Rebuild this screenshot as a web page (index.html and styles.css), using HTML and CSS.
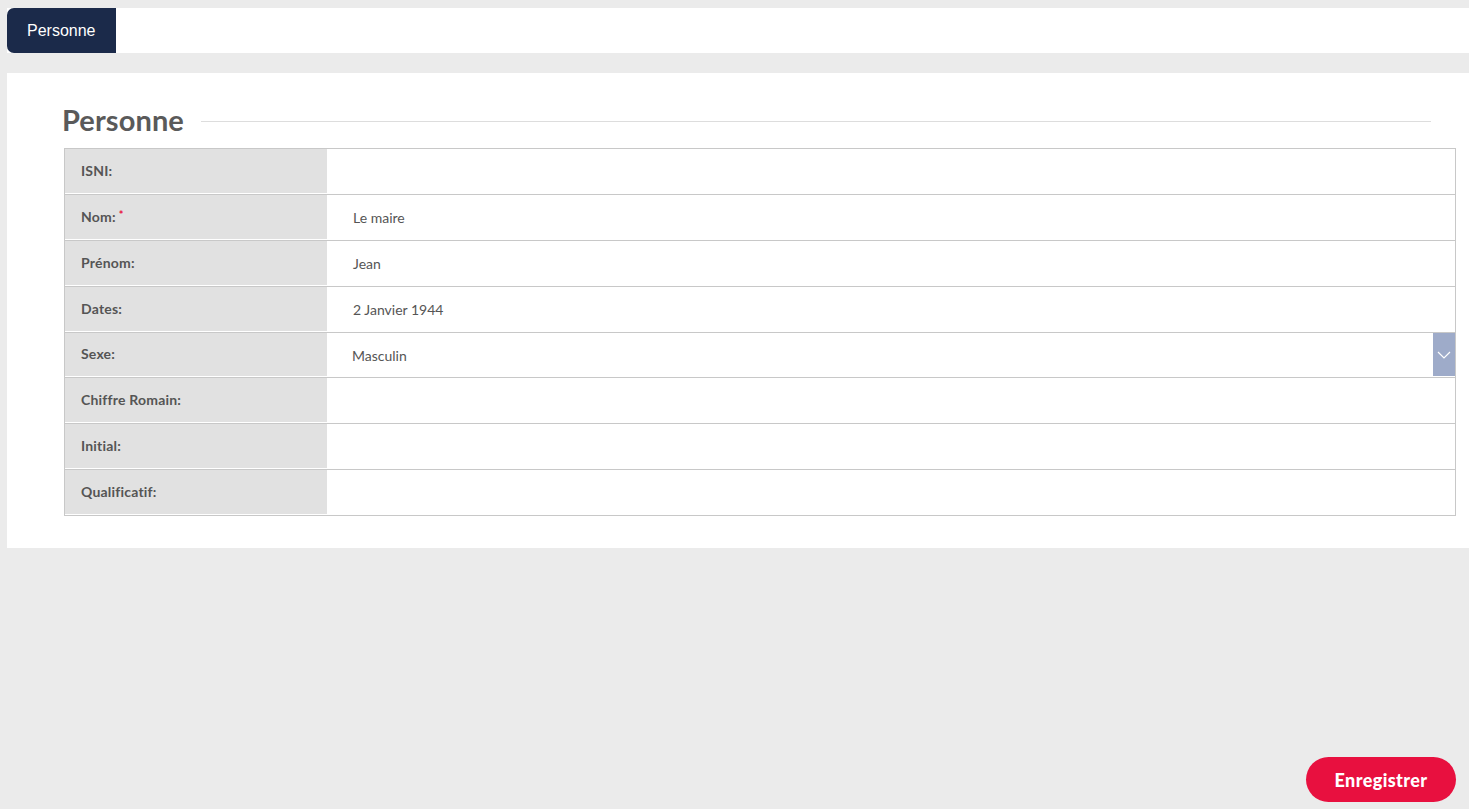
FILE: index.html
```html
<!DOCTYPE html>
<html lang="fr">
<head>
    <meta charset="UTF-8">
    <title>Personne</title>
    <link rel="stylesheet" href="styles.css">
</head>
<body>
    <div class="tabs">
        <div class="tab active">Personne</div>
    </div>

    <div class="panel">
        <div class="section-title">
            <h2>Personne</h2>
            <span class="rule"></span>
        </div>

        <div class="form-table">
            <div class="row">
                <div class="label">ISNI:</div>
                <div class="value"></div>
            </div>
            <div class="row">
                <div class="label">Nom: <span class="req">*</span></div>
                <div class="value">Le maire</div>
            </div>
            <div class="row">
                <div class="label">Prénom:</div>
                <div class="value">Jean</div>
            </div>
            <div class="row">
                <div class="label">Dates:</div>
                <div class="value">2 Janvier 1944</div>
            </div>
            <div class="row row-select">
                <div class="label">Sexe:</div>
                <div class="value select">
                    <span>Masculin</span>
                    <span class="arrow">
                        <svg width="14" height="8" viewBox="0 0 14 8"><path d="M1 1 L7 7 L13 1" fill="none" stroke="#fff" stroke-width="1.2"/></svg>
                    </span>
                </div>
            </div>
            <div class="row">
                <div class="label">Chiffre Romain:</div>
                <div class="value"></div>
            </div>
            <div class="row">
                <div class="label">Initial:</div>
                <div class="value"></div>
            </div>
            <div class="row">
                <div class="label">Qualificatif:</div>
                <div class="value"></div>
            </div>
        </div>
    </div>

    <button class="save">Enregistrer</button>
</body>
</html>
```

FILE: styles.css
```css
* {
    margin: 0;
    padding: 0;
    box-sizing: border-box;
}

body {
    background: #ebebeb;
    font-family: 'Lato', 'Open Sans', sans-serif;
    color: #555;
    height: 809px;
    padding: 8px 0 0 7px;
    position: relative;
}

.tabs {
    display: flex;
    background: #fff;
    height: 45px;
}

.tab {
    background: #1b2a4a;
    color: #fff;
    font-family: 'Liberation Sans', Arial, sans-serif;
    font-size: 16px;
    padding: 0 20px;
    width: 109px;
    display: flex;
    align-items: center;
    border-radius: 7px 0 0 7px;
}

.panel {
    background: #fff;
    margin-top: 20px;
    padding: 28px 13px 31px 55px;
    height: 475px;
}

.section-title {
    display: flex;
    align-items: center;
    gap: 17px;
    padding-right: 25px;
    margin-bottom: 9px;
}

.section-title h2 {
    font-size: 29px;
    font-weight: 700;
    color: #5a5a5a;
    line-height: 38px;
    letter-spacing: 0.1px;
}

.rule {
    flex: 1;
    height: 1px;
    background: #ddd;
    margin-top: 3px;
}

.form-table {
    border: 1px solid #c8c8c8;
    border-bottom: none;
    margin-left: 2px;
}

.row {
    display: flex;
    height: 46px;
    border-bottom: 1px solid #c8c8c8;
}

.row-select {
    height: 45px;
}

.label {
    width: 262px;
    background: #e1e1e1;
    padding-left: 16px;
    font-size: 14px;
    font-weight: 700;
    letter-spacing: 0.2px;
    display: flex;
    align-items: center;
    margin-bottom: 1px;
    padding-bottom: 2px;
}

.req {
    color: #e8103f;
    font-size: 11px;
    align-self: flex-start;
    margin-top: 13px;
    margin-left: 3px;
}

.value {
    flex: 1;
    padding-left: 26px;
    font-size: 14px;
    display: flex;
    align-items: center;
    padding-bottom: 1px;
}

.value.select {
    justify-content: space-between;
    padding-left: 25px;
    padding-bottom: 0;
}

.arrow {
    width: 22px;
    height: 43px;
    background: #9eabc9;
    display: flex;
    align-items: center;
    justify-content: center;
    margin-bottom: 1px;
}

.save {
    position: absolute;
    right: 13px;
    bottom: 7px;
    width: 150px;
    height: 45px;
    border: none;
    border-radius: 23px;
    background: #e8103f;
    color: #fff;
    font-family: 'Lato', sans-serif;
    font-size: 18px;
    font-weight: 900;
    letter-spacing: 0.4px;
}
```
